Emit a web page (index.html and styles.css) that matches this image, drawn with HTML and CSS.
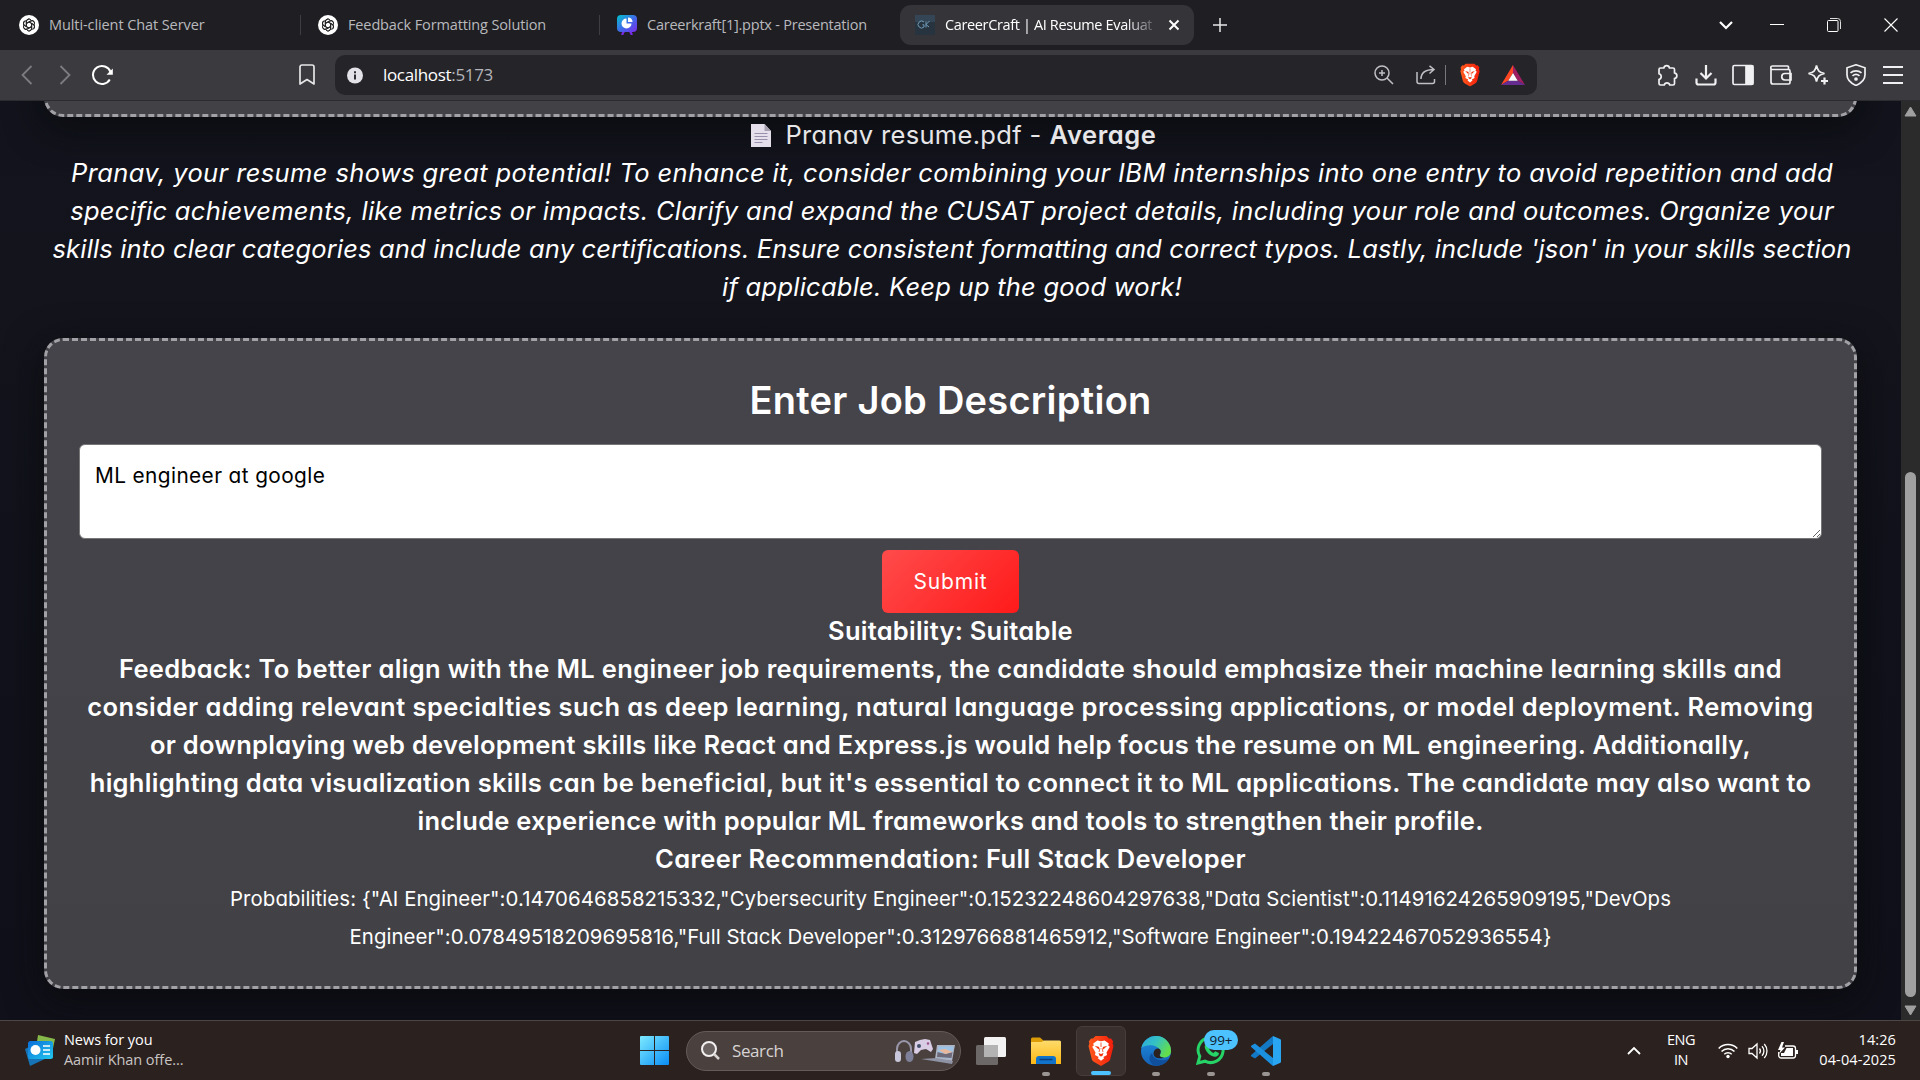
FILE: index.html
```html
<!DOCTYPE html>
<html lang="en">
<head>
<meta charset="utf-8">
<title>CareerCraft | AI Resume Evaluator</title>
<link rel="stylesheet" href="styles.css">
</head>
<body>
<svg class="defs" width="0" height="0" aria-hidden="true">
  <defs>
    <linearGradient id="slide" x1="0" y1="0" x2="1" y2="1"><stop offset="0" stop-color="#00c4cc"/><stop offset=".5" stop-color="#3c6ee8"/><stop offset="1" stop-color="#7d2ae8"/></linearGradient>
    <linearGradient id="win" x1="0" y1="0" x2="1" y2="1"><stop offset="0" stop-color="#7deaff"/><stop offset="1" stop-color="#0a8df5"/></linearGradient>
    <linearGradient id="lion" x1="0" y1="0" x2="1" y2="0"><stop offset="0" stop-color="#ff5a1c"/><stop offset="1" stop-color="#f21d0c"/></linearGradient>
    <linearGradient id="edgeTop" x1="0" y1="0" x2="1" y2=".5"><stop offset="0" stop-color="#2aa7dc"/><stop offset=".5" stop-color="#35c1c4"/><stop offset="1" stop-color="#63dd4b"/></linearGradient>
    <linearGradient id="edgeLow" x1="0" y1="0" x2="0" y2="1"><stop offset="0" stop-color="#1e8fe0"/><stop offset="1" stop-color="#1560b4"/></linearGradient>
    <linearGradient id="folder" x1="0" y1="0" x2="0" y2="1"><stop offset="0" stop-color="#ffdc6b"/><stop offset="1" stop-color="#fcb714"/></linearGradient>
    <linearGradient id="newsCard" x1="0" y1="0" x2="1" y2="1"><stop offset="0" stop-color="#0a6ed8"/><stop offset="1" stop-color="#22c8ee"/></linearGradient>
    <symbol id="knot" viewBox="0 0 20 20">
      <circle cx="10" cy="10" r="10" fill="#fff"/>
      <g fill="none" stroke="#222" stroke-width="1">
        <path id="petal" d="M7.3 11.6V6.6a2.7 2.7 0 0 1 5-1.3M7.3 8.5l4.3-2.4a2.7 2.7 0 0 1 3.8 1.4"/>
        <use href="#petal" transform="rotate(60 10 10)"/><use href="#petal" transform="rotate(120 10 10)"/><use href="#petal" transform="rotate(180 10 10)"/><use href="#petal" transform="rotate(240 10 10)"/><use href="#petal" transform="rotate(300 10 10)"/>
      </g>
    </symbol>
    <symbol id="brave" viewBox="0 0 26 30">
      <path d="M7.500 0h11l2.500 2.600 2-.2 2.200 3-.6 2 .9 2.600-3.300 13.200c-.4 1.200-1 1.800-2 2.500L13 30l-7.200-4.300c-1-.7-1.600-1.300-2-2.500L.5 10l.9-2.600-.6-2 2.200-3 2 .2z" fill="url(#lion)"/>
      <path d="M13 5.200l3.600-.8 4.200 3.200-.6 1.800 1.600 1.300-3.300 5.800.5 2.500-3.700 2 .9 1.200L13 24.800l-3.200-2.600.9-1.200-3.700-2 .5-2.500-3.300-5.800 1.600-1.300-.6-1.800 4.200-3.200z" fill="#fff"/>
      <path d="M6.700 9.800l4.600 1.200-.6 2.600zM19.300 9.800L14.700 11l.6 2.600zM10.500 17l2.500 1.100 2.500-1.100-1 2.700-1.500.8-1.500-.8z" fill="#f4360f"/>
      <path d="M13 6.500v4.500M12 12l-1 4M14 12l1 4" stroke="#f4360f" stroke-width=".8"/>
    </symbol>
  </defs>
</svg>

<header class="tabs">
  <div class="tab"><svg class="fav" viewBox="0 0 20 20"><use href="#knot"/></svg><span class="t1">Multi-client Chat Server</span></div>
  <div class="tab split"><svg class="fav" viewBox="0 0 20 20"><use href="#knot"/></svg><span class="t2">Feedback Formatting Solution</span></div>
  <div class="tab split"><svg class="fav" viewBox="0 0 20 20"><path d="M7 16l-2 4M13 16l2 4" stroke="#7d2ae8" stroke-width="2.200"/><rect width="20" height="17" rx="4" fill="url(#slide)"/><path d="M9.500 3.500a5 5 0 1 0 5 5h-5z" fill="#fff"/><path d="M11 2.500a4.800 4.800 0 0 1 4.600 4.600H11z" fill="#fff"/></svg><span class="t3">Careerkraft[1].pptx - Presentation</span></div>
  <div class="tab active"><svg class="fav" viewBox="0 0 20 20"><rect width="20" height="20" fill="#27333f"/><rect width="20" height="7" fill="#344656"/><path d="M9 7a3.500 3.500 0 1 0 0 5V9.800H7.500M11 6.500v6M14.500 6l-3.500 3.500 3 2.500" fill="none" stroke="#6f9cba" stroke-width="1"/></svg><span class="t4">CareerCraft | AI Resume Evaluat</span>
    <svg class="tab-close" viewBox="0 0 12 12"><path d="M1.500 1.500l9 9M10.500 1.500l-9 9" stroke="#fff" stroke-width="2"/></svg></div>
  <svg class="plus" viewBox="0 0 14 14"><path d="M7 0v14M0 7h14" stroke="#e8e8ea" stroke-width="1.500"/></svg>
  <div class="window-buttons">
    <svg width="14" height="10" viewBox="0 0 14 10"><path d="M1 2l6 6 6-6" fill="none" stroke="#fff" stroke-width="2.200"/></svg>
    <svg width="14" height="14" viewBox="0 0 14 14"><path d="M0 6.500h14" stroke="#fff"/></svg>
    <svg width="14" height="14" viewBox="0 0 14 14"><path d="M3 .5h7.500a3 3 0 0 1 3 3V11" fill="none" stroke="#ddd"/><rect x=".5" y="2.500" width="10.500" height="11" rx="1" fill="none" stroke="#fff"/></svg>
    <svg width="14" height="14" viewBox="0 0 14 14"><path d="M.5.5l13 13M13.500.5l-13 13" stroke="#fff" stroke-width="1.100"/></svg>
  </div>
</header>

<nav class="toolbar">
  <div class="nav-icons">
    <svg width="12" height="20" viewBox="0 0 12 20"><path d="M10.500 1L1.500 10l9 9" fill="none" stroke="#7d7d81" stroke-width="1.800"/></svg>
    <svg width="12" height="20" viewBox="0 0 12 20"><path d="M1.500 1l9 9-9 9" fill="none" stroke="#7d7d81" stroke-width="1.800"/></svg>
    <svg width="22" height="22" viewBox="0 0 22 22"><path d="M17.800 15.500A9 9 0 1 1 18.500 8" fill="none" stroke="#fff" stroke-width="2"/><path d="M20.800 4.500v6.300h-6.300z" fill="#fff"/></svg>
  </div>
  <svg class="bookmark" width="16" height="22" viewBox="0 0 16 22"><path d="M1 3a2 2 0 0 1 2-2h10a2 2 0 0 1 2 2v17l-7-4.500L1 20z" fill="none" stroke="#e6e6e8" stroke-width="1.700" stroke-linejoin="round"/></svg>
  <div class="address">
    <svg width="16" height="17" viewBox="0 0 16 17"><circle cx="8" cy="8.500" r="8" fill="#e2e2e8"/><path d="M8 7.500V12.500M8 4.200v2" stroke="#252529" stroke-width="1.900"/></svg>
    <span class="url">localhost<span class="port">:5173</span></span>
    <div class="address-icons">
      <svg width="20" height="20" viewBox="0 0 20 20" fill="none" stroke="#bfbfc6" stroke-width="1.500"><circle cx="8" cy="8" r="7"/><path d="M13 13l6 6M8 5v6M5 8h6"/></svg>
      <svg width="20" height="20" viewBox="0 0 20 20" fill="none" stroke="#bfbfc6" stroke-width="1.500"><path d="M1 7v9.500a2 2 0 0 0 2 2h13.500a2 2 0 0 0 2-2V14M5 14c0-6 4-9.500 13-9.500M13.500.8L18 4.500l-4.500 4"/></svg>
      <i class="bar"></i>
      <svg width="20" height="24" viewBox="0 0 26 30"><use href="#brave"/></svg>
      <svg width="24" height="20" viewBox="0 0 24 20"><path d="M12 0L0 20l7.500-4.500L12 8z" fill="#ff4724"/><path d="M12 0l12 20-7.500-4.500L12 8z" fill="#9e1f63"/><path d="M0 20h24l-7.500-4.500h-9z" fill="#662d91"/><path d="M12 8l4.700 7.700H7.300z" fill="#fff"/></svg>
    </div>
  </div>
  <div class="ext">
    <svg width="22" height="22" viewBox="0 0 22 22"><path d="M2 5.500a1.500 1.500 0 0 1 1.500-1.500h3.300a2.900 2.900 0 0 1 5.700 0h3.500A1.500 1.500 0 0 1 17.500 5.500v3.300a2.900 2.900 0 0 1 0 5.700v5a1.500 1.500 0 0 1-1.500 1.500h-3.200a2.900 2.900 0 0 0-5.600 0H3.500A1.500 1.500 0 0 1 2 19.500V15.500a3 3 0 0 0 0-5.800z"/></svg>
    <svg width="22" height="22" viewBox="0 0 22 22"><path d="M11 1v13M5.500 9L11 14.500 16.500 9M1.500 14.500v4a2 2 0 0 0 2 2h15a2 2 0 0 0 2-2v-4" stroke-width="2.200"/></svg>
    <svg width="22" height="22" viewBox="0 0 22 22"><rect x="1" y="1.500" width="20" height="19" rx="1.500"/><path d="M14 2h6.500v18H14z" fill="#f0f0f2"/></svg>
    <svg width="22" height="22" viewBox="0 0 22 22"><path d="M1 4.500v13.500a2 2 0 0 0 2 2h15.500a1.500 1.500 0 0 0 1.500-1.500V7a1.500 1.500 0 0 0-1.500-1.500H2.500a1.500 1.500 0 0 1 0-3.500H17.500a1 1 0 0 1 1 1v2.500M21 9.500h-6a3.200 3.200 0 0 0 0 6.500h6z"/></svg>
    <svg width="22" height="22" viewBox="0 0 22 22"><path d="M9.500 1.500c1.200 5.400 2.600 6.800 8 8-5.400 1.200-6.800 2.600-8 8-1.200-5.400-2.600-6.800-8-8 5.400-1.200 6.800-2.600 8-8z"/><path d="M17.500 13.500v7M14 17h7" stroke-width="2.200"/></svg>
    <svg width="22" height="22" viewBox="0 0 22 22"><path d="M11 .8l9 3v7c0 5-4 8.500-9 10.700-5-2.200-9-5.700-9-10.700v-7z"/><path d="M5.500 8.800a8.500 8.500 0 0 1 11 0M7.500 11.800a5.500 5.500 0 0 1 7 0"/><circle cx="11" cy="15" r="1" fill="#f0f0f2"/></svg>
    <svg width="22" height="22" viewBox="0 0 22 22"><path d="M1 3h20M1 11h20M1 19h20" stroke-width="2"/></svg>
  </div>
</nav>

<div class="viewport">
  <main class="page">
    <section class="card upload"></section>
    <p class="file"><svg width="20" height="24" viewBox="0 0 20 24"><path d="M0 1h13.500L20 8v16H0z" fill="#e4dfea"/><path d="M13.500 1L20 8h-6.500z" fill="#a79fb0"/><path d="M3.500 10.500h13M3.500 13.500h13M3.500 16.500h13M3.500 19.500h8" stroke="#9b8fae" stroke-width="1.200"/></svg><span class="name">Pranav resume.pdf -</span><strong>Average</strong></p>
    <p class="review">
      <span class="i1">Pranav, your resume shows great potential! To enhance it, consider combining your IBM internships into one entry to avoid repetition and add</span>
      <span class="i2">specific achievements, like metrics or impacts. Clarify and expand the CUSAT project details, including your role and outcomes. Organize your</span>
      <span class="i3">skills into clear categories and include any certifications. Ensure consistent formatting and correct typos. Lastly, include 'json' in your skills section</span>
      <span class="i4">if applicable. Keep up the good work!</span>
    </p>
    <section class="card job">
      <h2>Enter Job Description</h2>
      <textarea spellcheck="false">ML engineer at google</textarea>
      <button>Submit</button>
      <div class="result">
        <span class="s">Suitability: Suitable</span>
        <span class="b1">Feedback: To better align with the ML engineer job requirements, the candidate should emphasize their machine learning skills and</span>
        <span class="b2">consider adding relevant specialties such as deep learning, natural language processing applications, or model deployment. Removing</span>
        <span class="b3">or downplaying web development skills like React and Express.js would help focus the resume on ML engineering. Additionally,</span>
        <span class="b4">highlighting data visualization skills can be beneficial, but it's essential to connect it to ML applications. The candidate may also want to</span>
        <span class="b5">include experience with popular ML frameworks and tools to strengthen their profile.</span>
        <span class="c">Career Recommendation: Full Stack Developer</span>
      </div>
      <div class="odds">
        <span class="p1">Probabilities: {"AI Engineer":0.1470646858215332,"Cybersecurity Engineer":0.15232248604297638,"Data Scientist":0.11491624265909195,"DevOps</span>
        <span class="p2">Engineer":0.07849518209695816,"Full Stack Developer":0.3129766881465912,"Software Engineer":0.19422467052936554}</span>
      </div>
    </section>
  </main>
  <aside class="scroll">
    <svg width="13" height="11" viewBox="0 0 13 11"><path d="M6.500 1L12 10H1z" fill="#a0a0a0" stroke="#a0a0a0" stroke-linejoin="round"/></svg>
    <i class="thumb"></i>
    <svg width="13" height="11" viewBox="0 0 13 11"><path d="M6.500 10L12 1H1z" fill="#a0a0a0" stroke="#a0a0a0" stroke-linejoin="round"/></svg>
  </aside>
</div>

<footer class="taskbar">
  <div class="news">
    <svg width="30" height="31" viewBox="0 0 30 31"><path d="M13 0l17 4-3 14-16-5z" fill="#86b94a"/><path d="M0 14l6-3 16 12-17 8z" fill="#1673b5"/><rect x="3" y="6" width="25" height="18" rx="2.500" fill="url(#newsCard)"/><circle cx="10.500" cy="15" r="5" fill="#fff"/><path d="M18 11h7M18 15h7M18 19h7" stroke="#fff" stroke-width="1.600"/></svg>
    <div class="headline"><span class="n1">News for you</span><span class="n2">Aamir Khan offe...</span></div>
  </div>
  <svg class="start" width="29" height="29" viewBox="0 0 29 29"><path d="M1 0h13v14H0V1a1 1 0 0 1 1-1zM15 0h13a1 1 0 0 1 1 1v13H15zM0 15h14v14H1a1 1 0 0 1-1-1zM15 15h14v13a1 1 0 0 1-1 1H15z" fill="url(#win)"/></svg>
  <div class="search">
    <svg width="19" height="19" viewBox="0 0 19 19"><circle cx="8" cy="8" r="7" fill="#6b6362" stroke="#f2f0f0" stroke-width="2"/><path d="M13 13l5 5" stroke="#d8d5d4" stroke-width="2.500"/></svg>
    <span>Search</span>
    <svg class="deco" width="60" height="26" viewBox="0 0 60 26"><path d="M2 18V11a7 8 0 0 1 14 0v7" fill="none" stroke="#9a97ab" stroke-width="2"/><rect x="0" y="13" width="6" height="11" rx="3" fill="#c7c6da"/><ellipse cx="14.500" cy="18.500" rx="4" ry="5.500" fill="#7d8098"/><path d="M20 4l5-2 5-1 5 1 3 9-2 3-5-3-5 1-4 4-3-1z" fill="#d8cde4"/><circle cx="24" cy="8" r="2" fill="#444e6b"/><circle cx="33" cy="5.500" r="1.200" fill="#9a4d86"/><path d="M42 7l18 0-3 16-17-2z" fill="#aeb4c4"/><path d="M43.500 8.500l15 0-2.300 12-14.200-1.500z" fill="#9cc3e6"/><path d="M42.500 14l8 2 7-2-1 6-14.500-1z" fill="#6f6a78"/><path d="M43.500 12l7-1 7 3-7 2z" fill="#e9b79b"/><path d="M26 21l15-1 17 3-1 3z" fill="#8f93a6"/></svg>
  </div>
  <div class="apps">
    <div class="app"><svg width="30" height="28" viewBox="0 0 30 28"><rect y="8" width="22" height="20" rx="1.500" fill="#6b6867"/><rect x="8" width="22" height="20" rx="1.500" fill="#f2f2f2"/><path d="M8 8h14v12H8z" fill="#b4b3b3"/></svg></div>
    <div class="app open"><svg width="30" height="27" viewBox="0 0 30 27"><path d="M0 2a1.500 1.500 0 0 1 1.500-1.500H9L13 4v4H0z" fill="#dc9c07"/><path d="M0 5h10.500L13 3.500h15.500A1.500 1.500 0 0 1 30 5v22H0z" fill="url(#folder)"/><path d="M5 27v-5a3 3 0 0 1 3-3h14a3 3 0 0 1 3 3v5z" fill="#1173c9"/><path d="M8.500 22.500h13" stroke="#0b3f7d" stroke-width="1.500"/></svg></div>
    <div class="app current"><svg width="26" height="30" viewBox="0 0 26 30"><use href="#brave"/></svg></div>
    <div class="app open"><svg width="30" height="30" viewBox="0 0 30 30"><circle cx="15" cy="15" r="15" fill="url(#edgeLow)"/><path d="M.3 12A15 15 0 0 1 30 15c0 5-4 6.500-7.500 6.500-3 0-4.500-1-3.500-2.500 1-1.500 1-3 .5-4.500C17.500 9 6 7 .3 12z" fill="url(#edgeTop)"/><path d="M11 17c1 6 8 9 16.500 6.200A15 15 0 0 1 15 30c-6-1-9-9-4-13z" fill="#0f4f9c"/><path d="M12.500 17.500c0-3 2-5 4.500-5 1.500 0 2.500 1 2.700 2.500.2 1.700-.5 2.600-.9 3.500-.5 1.500.7 3 4.200 3-4 2-10.500.5-10.500-4z" fill="#2b211f"/></svg></div>
    <div class="app open"><svg width="30" height="29" viewBox="0 0 30 29"><path d="M2 27l1.800-6.700A12.500 12.500 0 1 1 9 25.200z" fill="none" stroke="#25d366" stroke-width="3"/><path d="M10.500 7.500l2-.3 1.700 3.800-1.200 1.800c1 2 2.500 3.200 4.500 4.200l1.700-1.700 3.700 1.700c.2 3-2.500 4-4.400 3.700C13.500 19.700 9.500 15.500 8.700 11c0-1.500.8-3 1.800-3.500z" fill="#25d366"/></svg><b class="badge">99+</b></div>
    <div class="app open"><svg width="30" height="30" viewBox="0 0 30 30"><path d="M22 0l7 3a1.500 1.500 0 0 1 1 1.500v21a1.500 1.500 0 0 1-1 1.500l-7 3z" fill="#2aa5f2"/><path d="M22 0v8L4 22.500l-3.500-2a1 1 0 0 1 0-1.700z" fill="#1479c4"/><path d="M22 30v-8L4 7.500l-3.500 2a1 1 0 0 0 0 1.700z" fill="#1b90df"/></svg></div>
  </div>
  <div class="tray">
    <svg class="up" width="14" height="9" viewBox="0 0 14 9"><path d="M1 8l6-6 6 6" fill="none" stroke="#fff" stroke-width="1.800"/></svg>
    <div class="lang"><span>ENG</span><span>IN</span></div>
    <svg class="wifi" width="20" height="16" viewBox="0 0 20 16" fill="none" stroke="#fff" stroke-width="1.500"><path d="M.7 5.500a13 13 0 0 1 18.600 0M3.500 8.500a9 9 0 0 1 13 0M6.300 11.300a5.200 5.200 0 0 1 7.400 0"/><circle cx="10" cy="13.500" r="1.700" fill="#fff" stroke="none"/></svg>
    <svg class="sound" width="20" height="18" viewBox="0 0 20 18" fill="none" stroke="#fff" stroke-width="1.300"><path d="M1 6.500h3L9 2v14l-5-4.500H1zM11.500 6.500a4 4 0 0 1 0 5M14 4.200a7 7 0 0 1 0 9.600M16.300 2a10.500 10.500 0 0 1 0 14"/></svg>
    <svg class="battery" width="20" height="18" viewBox="0 0 20 18"><path d="M7 4h8a2.500 2.500 0 0 1 2.500 2.500v7A2.500 2.500 0 0 1 15 16H3.200A2.500 2.500 0 0 1 .7 13.500V10" fill="none" stroke="#fff" stroke-width="1.300"/><path d="M8.500 6H15v8H3v-3h3zM18 8h2v4h-2z" fill="#fff"/><path d="M3.500 0L0 8h2.500L1 12l6-6.500H4L6 0z" fill="#fff"/></svg>
    <div class="clock"><span>14:26</span><span>04-04-2025</span></div>
  </div>
</footer>
</body>
</html>
```
FILE: styles.css
```css
* { box-sizing: border-box; margin: 0; }
svg { display: block; flex: none; }
.defs { position: absolute; }

body {
  display: flex;
  flex-direction: column;
  height: 1080px;
  overflow: hidden;
  background: #12131c;
  font-family: "Open Sans", "Noto Sans", sans-serif;
  color: #fff;
}

/* Tab strip */
.tabs {
  display: flex;
  align-items: center;
  flex: none;
  height: 50px;
  background: #1f1f23;
  font-size: 14.5px;
}
.tab {
  position: relative;
  display: flex;
  align-items: center;
  gap: 10px;
  width: 299px;
  height: 40px;
  padding-left: 18px;
  color: #b9b9bd;
  white-space: nowrap;
}
.tab span { padding-bottom: 2px; }
.tab:first-child { width: 300px; padding-left: 19px; }
.split::before {
  content: "";
  position: absolute;
  left: 0;
  top: 10px;
  width: 1px;
  height: 20px;
  background: #3d3d42;
}
.tab.active {
  width: 294px;
  margin-left: 2px;
  padding-left: 15px;
  border-radius: 11px;
  background: #343439;
  color: #fff;
}
.fav { width: 20px; height: 20px; }
.t1 { letter-spacing: -.09px; }
.t2 { letter-spacing: -.13px; }
.t3 { letter-spacing: -.23px; }
.t4 {
  width: 208px;
  overflow: hidden;
  letter-spacing: -.36px;
  -webkit-mask-image: linear-gradient(90deg, #000 87%, rgba(0, 0, 0, .2));
  mask-image: linear-gradient(90deg, #000 87%, rgba(0, 0, 0, .2));
}
.tab-close { width: 12px; height: 12px; margin-left: 5px; }
.plus { width: 14px; height: 14px; margin-left: 19px; }
.window-buttons {
  display: flex;
  align-items: center;
  gap: 43px;
  margin-left: auto;
  padding-right: 22px;
}
.window-buttons svg:first-child { margin-right: -6px; }

/* Toolbar */
.toolbar {
  display: flex;
  align-items: center;
  flex: none;
  height: 51px;
  border-bottom: 1px solid #2c2c30;
  background: #3b3b3f;
}
.nav-icons { display: flex; align-items: center; width: 299px; padding-left: 21px; gap: 26px; }
.nav-icons svg:last-child { margin-left: -5px; }
.address {
  display: flex;
  align-items: center;
  width: 1202px;
  height: 40px;
  margin-left: 20px;
  padding: 0 12px;
  border-radius: 10px;
  background: #252529;
}
.url { margin-left: 20px; padding-bottom: 1px; font-size: 17px; letter-spacing: -.33px; }
.port { color: #b4b4ba; }
.address-icons { display: flex; align-items: center; gap: 21px; margin-left: auto; }
.address-icons svg:first-child { margin-right: 1px; }
.address-icons .bar { width: 1px; height: 20px; margin: 0 -7px 0 -12px; background: #77777c; }
.ext { display: flex; gap: 15.5px; margin-left: auto; padding-right: 16px; }
.ext svg { fill: none; stroke: #f0f0f2; stroke-width: 1.7; }

/* Page */
.viewport { display: flex; flex: none; height: 919px; overflow: hidden; }
.page {
  flex: 1;
  padding: 0 44px;
  background: linear-gradient(180deg, #12131c 0%, #14141d 22%, #11121b 50%, #10101a 100%);
  font-family: Inter, sans-serif;
  font-feature-settings: "cv11";
  font-size: 25.5px;
  line-height: 38px;
  text-align: center;
}
.card {
  border: 3px dashed #a2a2a6;
  border-radius: 19px;
  background: linear-gradient(180deg, #44444a, #414146);
  box-shadow: 0 9px 38px rgba(8, 9, 10, .75);
}
.upload { height: 116px; margin: -100px 0 -1px; }
.file {
  position: relative;
  display: flex;
  align-items: center;
  justify-content: center;
  padding-left: 7px;
  color: #e6e6e8;
}
.name { margin: 0 8px 0 14px; letter-spacing: .32px; }
.file strong { font-weight: 600; letter-spacing: .587px; }
.review { position: relative; margin: 0 -10px 32px; padding-left: 3px; font-style: italic; }
.review span, .result span, .odds span { display: block; white-space: nowrap; }
.i1 { letter-spacing: .38px; }
.i2 { letter-spacing: .3px; }
.i3 { letter-spacing: .16px; }
.i4 { letter-spacing: .245px; }

.job { height: 651px; padding: 31px 32px 0; }
h2 {
  font-size: 38px;
  line-height: 57px;
  font-weight: 600;
  letter-spacing: .257px;
}
textarea {
  display: block;
  width: 100%;
  height: 95px;
  margin: 15px 0 11px;
  padding: 12px 15px;
  border: 1px solid #767676;
  border-radius: 6px;
  background: #fff;
  color: #000;
  font: 400 20.8px/38px Inter, sans-serif;
  font-feature-settings: "cv11";
  letter-spacing: .4px;
  resize: vertical;
}
button {
  display: block;
  width: 137px;
  height: 63px;
  margin: 0 auto -1px;
  border: 0;
  border-radius: 6px;
  background: linear-gradient(135deg, #ff4b4b, #ff1a1a);
  color: #fff;
  font: 400 21px Inter, sans-serif;
  letter-spacing: .8px;
}
.result { font-weight: 600; }
.s { letter-spacing: .237px; }
.b1 { letter-spacing: .36px; }
.b2 { letter-spacing: .45px; }
.b3 { letter-spacing: .274px; }
.b4 { letter-spacing: .28px; }
.b5 { letter-spacing: .255px; }
.c { letter-spacing: .373px; }
.odds { padding-top: 2px; font-size: 20.4px; }
.p1 { letter-spacing: .078px; }
.p2 { letter-spacing: .055px; }

.scroll {
  display: flex;
  flex-direction: column;
  align-items: center;
  width: 19px;
  padding: 5px 0 4px;
  background: #2b2b2b;
}
.thumb { width: 11px; height: 525px; margin: auto 0 8px; border-radius: 6px; background: #a0a0a0; }

/* Taskbar */
.taskbar {
  display: flex;
  flex: none;
  align-items: center;
  height: 60px;
  border-top: 1px solid #4c4644;
  background: #2b211f;
  font-size: 14.5px;
  line-height: 20px;
}
.news { display: flex; align-items: center; gap: 9px; width: 640px; padding-left: 25px; }
.news span { display: block; }
.headline, .lang, .clock { padding-bottom: 2px; }
.n1 { letter-spacing: -.05px; }
.n2 { color: #c9c5c4; letter-spacing: -.06px; }
.search {
  display: flex;
  align-items: center;
  width: 275px;
  height: 40px;
  margin-left: 17px;
  padding: 0 5px 0 14px;
  border: 1px solid #655c5a;
  border-radius: 20px;
  background: #4a403e;
}
.search span { margin-left: 12px; color: #d8d4d3; font-size: 17px; letter-spacing: -.4px; }
.deco { margin-left: auto; }
.apps { display: flex; gap: 5px; margin-left: 5px; }
.app {
  position: relative;
  display: flex;
  align-items: center;
  justify-content: center;
  width: 50px;
  height: 50px;
  border-radius: 6px;
}
.current { border: 1px solid #463e3c; background: #3a302e; }
.open::after, .current::after {
  content: "";
  position: absolute;
  bottom: 0;
  width: 8px;
  height: 4px;
  border-radius: 2px;
  background: #9a9492;
}
.current::after { width: 20px; background: #4cc2ff; }
.badge {
  position: absolute;
  left: 18px;
  top: 4px;
  width: 34px;
  height: 20px;
  border-radius: 10px;
  background: #4cc2ff;
  color: #10202c;
  font-size: 13.5px;
  font-weight: 400;
  text-align: center;
}
.tray { display: flex; align-items: center; margin-left: auto; padding-right: 24px; }
.tray span { display: block; }
.lang { width: 40px; margin-left: 20px; text-align: center; letter-spacing: -.5px; }
.wifi { margin-left: 17px; }
.sound { margin-left: 10px; }
.battery { margin-left: 10px; }
.clock { width: 98px; text-align: right; letter-spacing: .1px; }
```
